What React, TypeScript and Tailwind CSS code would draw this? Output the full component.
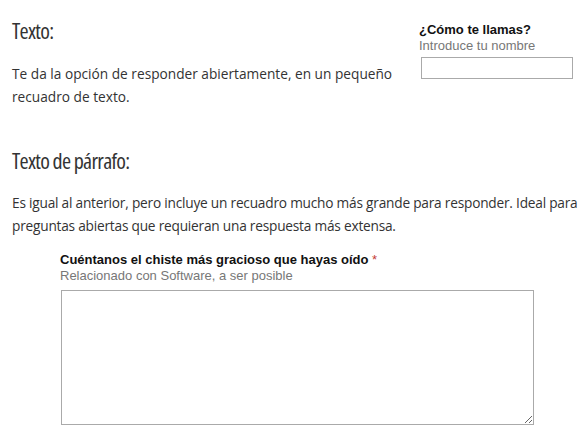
export default function App() {
  return (
    <div className="min-h-[437px] w-[587px] bg-white pl-3 pt-[17px] font-['Open_Sans',sans-serif] text-[#333]">
      <section className="flex">
        <div className="w-[400px]">
          <h2 className="text-[22px] font-normal leading-[26px] tracking-[-0.7px] text-[#333] [font-stretch:75%]">Texto:</h2>
          <p className="mt-[19px] text-[13.7px] leading-[23px]">
            Te da la opción de responder abiertamente, en un pequeño recuadro de texto.
          </p>
        </div>
        <div className="ml-[7px] pt-[5px] font-['Liberation_Sans',Arial,sans-serif] text-[13px]">
          <label htmlFor="nombre" className="block font-bold leading-[16px] text-[#111]">
            ¿Cómo te llamas?
          </label>
          <div className="leading-[16px] text-[#777]">Introduce tu nombre</div>
          <input
            id="nombre"
            type="text"
            className="ml-[2px] mt-[3px] h-[22px] w-[152px] border border-[#aaa] bg-white outline-none"
          />
        </div>
      </section>

      <section className="mt-[39px]">
        <h2 className="text-[22px] font-normal leading-[26px] tracking-[-0.7px] text-[#333] [font-stretch:75%]">
          Texto de párrafo:
        </h2>
        <p className="mt-[18px] text-[13.7px] leading-[23px] tracking-[-0.22px]">
          Es igual al anterior, pero incluye un recuadro mucho más grande para responder. Ideal para
          <br />
          preguntas abiertas que requieran una respuesta más extensa.
        </p>
        <div className="ml-[48px] mt-[15px] font-['Liberation_Sans',Arial,sans-serif] text-[13px]">
          <label htmlFor="chiste" className="block font-bold leading-[16px] text-[#111]">
            Cuéntanos el chiste más gracioso que hayas oído <span className="font-normal text-[#c43c35]">*</span>
          </label>
          <div className="leading-[16px] text-[#777]">Relacionado con Software, a ser posible</div>
          <textarea
            id="chiste"
            className="ml-[1px] mt-[6px] block h-[135px] w-[473px] border border-[#aaa] bg-white outline-none"
          />
        </div>
      </section>
    </div>
  );
}
